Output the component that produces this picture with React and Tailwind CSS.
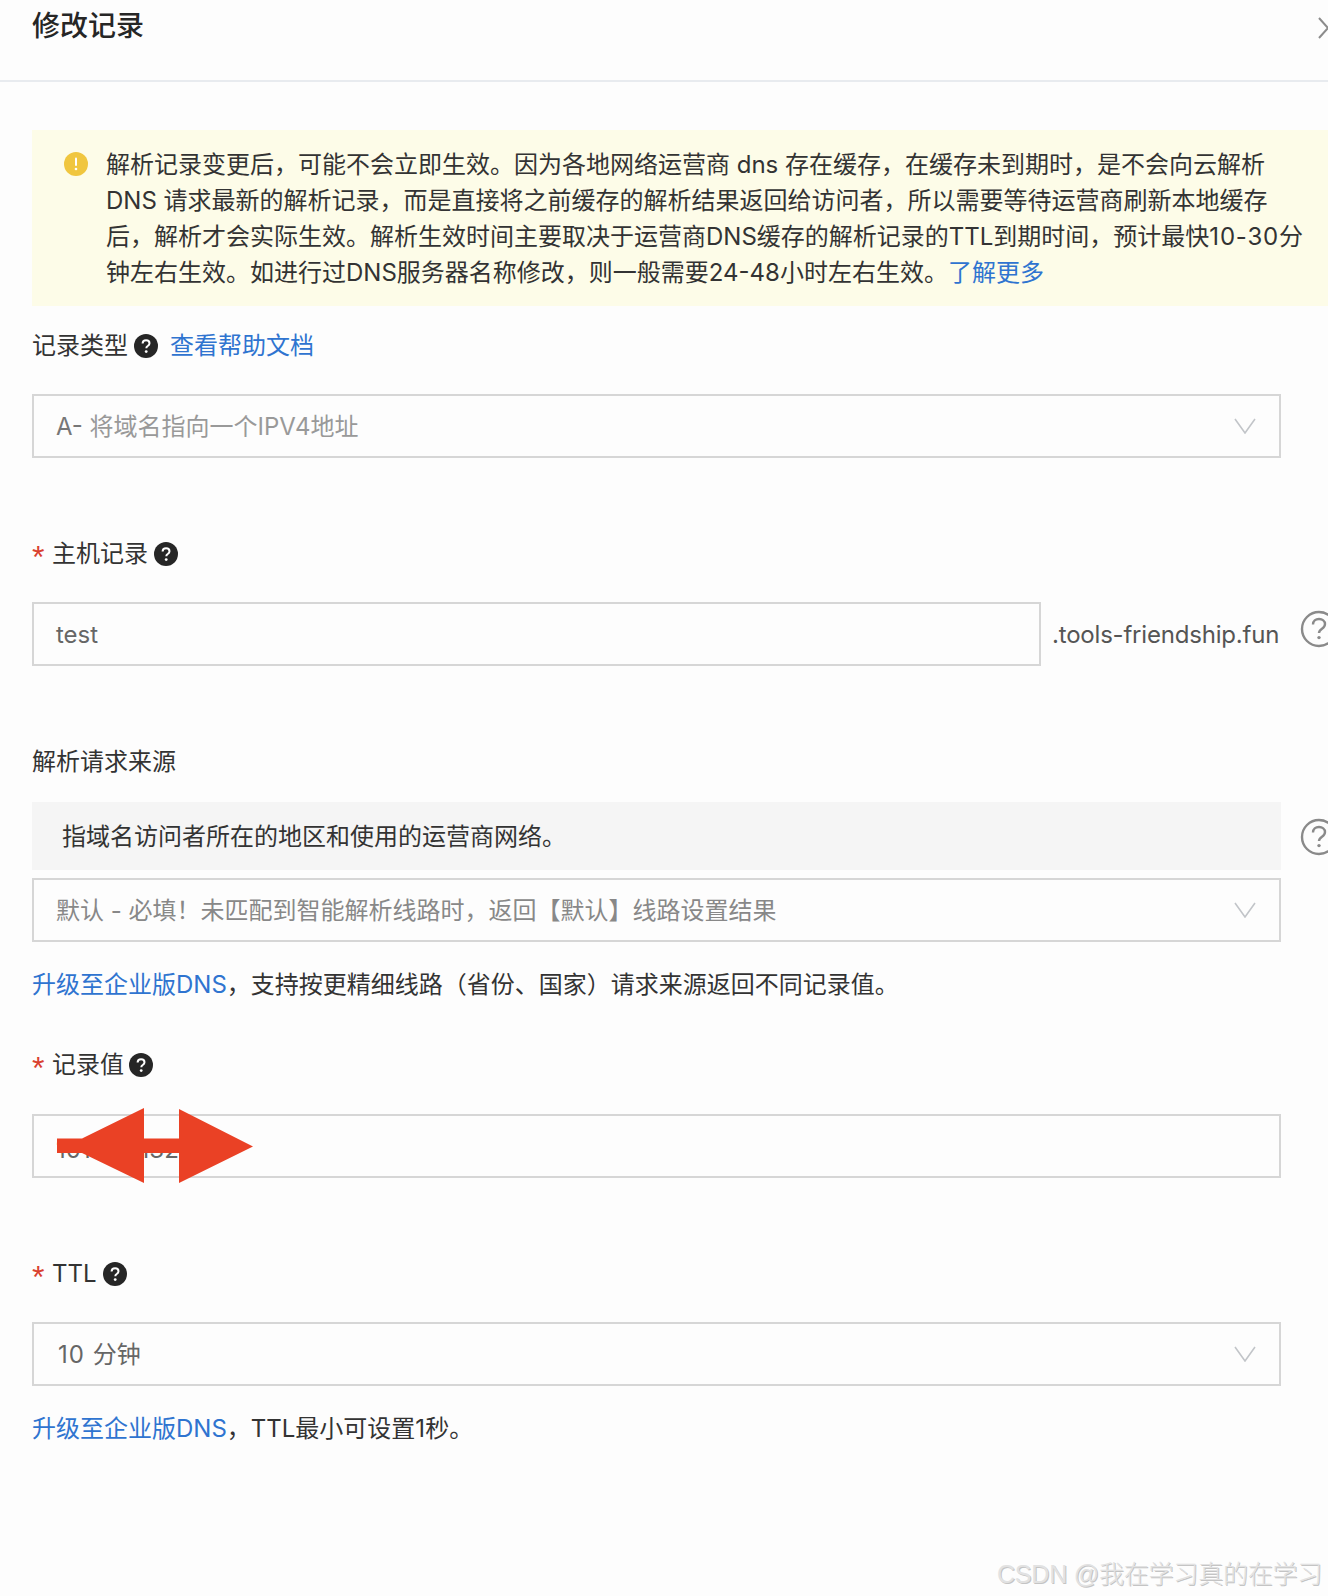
const FONT = "font-['Inter','Noto_Sans_CJK_SC',sans-serif]";

function Help() {
  return (
    <svg width="24" height="24" viewBox="0 0 24 24" className="shrink-0">
      <circle cx="12" cy="12" r="12" fill="#262626" />
      <path d="M8.6 9.6c0-2 1.5-3.3 3.5-3.3s3.4 1.2 3.4 2.9c0 1.4-.8 2.1-1.8 2.8-1 .6-1.4 1.1-1.4 2.3" fill="none" stroke="#fff" strokeWidth="2" />
      <circle cx="12.2" cy="17.6" r="1.4" fill="#fff" />
    </svg>
  );
}

function OutlineHelp() {
  return (
    <svg width="38" height="38" viewBox="0 0 38 38" className="absolute left-[1300px] top-0">
      <circle cx="19" cy="19" r="17" fill="none" stroke="#8a8a8a" strokeWidth="2.4" />
      <path d="M13 14.5c0-3.3 2.7-5.5 6-5.5s6 2.1 6 5c0 2.4-1.4 3.6-3 4.7-1.9 1.3-3 2.2-3 4.3" fill="none" stroke="#8a8a8a" strokeWidth="2.4" />
      <circle cx="19" cy="27.6" r="1.7" fill="#8a8a8a" />
    </svg>
  );
}

function Chevron() {
  return (
    <svg width="22" height="16" viewBox="0 0 22 16" className="mr-[-1px] shrink-0">
      <path d="M1 1l10 14L21 1" fill="none" stroke="#c2c5c9" strokeWidth="1.6" />
    </svg>
  );
}

function Req() {
  return <span className="w-[20px] pt-[6px] font-['Liberation_Sans',sans-serif] text-[32px] leading-[30px] text-[#d9402f]">*</span>;
}

function Field({ className = "", children, end }) {
  return (
    <div className={`flex items-center justify-between border-2 border-[#d6d6d6] pl-[22px] pr-[24px] ${className}`}>
      <span className="whitespace-nowrap pt-[2px]">{children}</span>
      {end}
    </div>
  );
}

export default function App() {
  return (
    <div className={`${FONT} relative h-[1596px] w-[1328px] overflow-hidden bg-[#fdfdfd] text-[24px] leading-[36px] text-[#333333]`}>
      <header className="flex h-[82px] items-start justify-between border-b-2 border-[#e8ebef] pl-[32px] pt-[5px]">
        <h1 className="text-[28px] font-medium leading-[43px] text-[#262626]">修改记录</h1>
        <svg width="12" height="22" viewBox="0 0 12 22" className="mr-[-2px] mt-[12px]">
          <path d="M1 1l9 10-9 10" fill="none" stroke="#8c8c8c" strokeWidth="2" />
        </svg>
      </header>

      <section className="ml-[32px] mt-[48px] flex h-[176px] gap-[18px] bg-[#fdfce8] pl-[32px] pt-[17px]">
        <svg width="24" height="24" viewBox="0 0 24 24" className="mt-[5px] shrink-0">
          <circle cx="12" cy="12" r="12" fill="#f0c63f" />
          <rect x="11" y="5.5" width="2" height="8.5" rx="1" fill="#fff" />
          <circle cx="12" cy="17" r="1.3" fill="#fff" />
        </svg>
        <div className="whitespace-nowrap">
          <div>解析记录变更后，可能不会立即生效。因为各地网络运营商 dns 存在缓存，在缓存未到期时，是不会向云解析</div>
          <div>DNS 请求最新的解析记录，而是直接将之前缓存的解析结果返回给访问者，所以需要等待运营商刷新本地缓存</div>
          <div>后，解析才会实际生效。解析生效时间主要取决于运营商DNS缓存的解析记录的TTL到期时间，预计最快<span className="tracking-[0.8px]">10-30</span>分</div>
          <div>钟左右生效。如进行过DNS服务器名称修改，则一般需要24-48小时左右生效。<span className="text-[#2f74d0]">了解更多</span></div>
        </div>
      </section>

      <main className="pl-[32px]">
        <div className="mt-[22px] flex h-[36px] items-center">
          <span>记录类型</span>
          <span className="ml-[6px]"><Help /></span>
          <span className="ml-[12px] text-[#2f74d0]">查看帮助文档</span>
        </div>
        <Field className="mt-[30px] h-[64px] w-[1249px] text-[#999999]" end={<Chevron />}>
          <span className="text-[#777777]">A-</span> 将域名指向一个IPV4地址
        </Field>

        <div className="mt-[78px] flex h-[36px] items-center">
          <Req />
          <span>主机记录</span>
          <span className="ml-[6px]"><Help /></span>
        </div>
        <div className="relative mt-[30px] flex h-[64px] items-center">
          <Field className="h-[64px] w-[1009px] text-[#666666]">test</Field>
          <span className="ml-[11px] whitespace-nowrap pt-[2px] tracking-[-0.2px] text-[#555555]">.tools-friendship.fun</span>
          <span className="absolute left-[-32px] top-[8px]"><OutlineHelp /></span>
        </div>

        <div className="mt-[78px] h-[36px]">解析请求来源</div>
        <div className="relative mt-[22px] flex h-[68px] w-[1249px] items-center bg-[#f5f5f5] pl-[30px] pt-[2px]">
          指域名访问者所在的地区和使用的运营商网络。
          <span className="absolute left-[-32px] top-[16px]"><OutlineHelp /></span>
        </div>
        <Field className="mt-[8px] h-[64px] w-[1249px] text-[#888888]" end={<Chevron />}>
          默认 - 必填！未匹配到智能解析线路时，返回【默认】线路设置结果
        </Field>
        <div className="mt-[25px] h-[36px] whitespace-nowrap">
          <span className="text-[#2f74d0]">升级至企业版DNS</span>，支持按更精细线路（省份、国家）请求来源返回不同记录值。
        </div>

        <div className="mt-[44px] flex h-[36px] items-center">
          <Req />
          <span>记录值</span>
          <span className="ml-[5px]"><Help /></span>
        </div>
        <div className="relative mt-[31px]">
          <Field className="h-[64px] w-[1249px] text-[#666666]"><span className="relative top-[3px]">101.132.132.145</span></Field>
          <svg width="200" height="78" viewBox="0 0 200 78" className="absolute left-[25px] top-[-6px]">
            <path d="M0 30.5H25L87 0V30.5H122V1L196 38.5L122 75V45H87V75L25 45H0Z" fill="#ea4125" />
          </svg>
        </div>

        <div className="mt-[78px] flex h-[36px] items-center">
          <Req />
          <span>TTL</span>
          <span className="ml-[6px]"><Help /></span>
        </div>
        <Field className="mt-[30px] h-[64px] w-[1249px] text-[#666666]" end={<Chevron />}>
          <span className="ml-[2px] tracking-[1px]">10 </span>分钟
        </Field>
        <div className="mt-[25px] h-[36px] whitespace-nowrap">
          <span className="text-[#2f74d0]">升级至企业版DNS</span>，TTL最小可设置1秒。
        </div>
      </main>

      <div className="absolute left-[997px] top-[1556px] whitespace-nowrap font-['Liberation_Sans','Noto_Sans_CJK_SC',sans-serif] text-[25px] font-light leading-[36px] tracking-[-0.2px] text-[#e2e2e2] [text-shadow:1px_1px_0_#c4c4c4]">
        CSDN @我在学习真的在学习
      </div>
    </div>
  );
}
